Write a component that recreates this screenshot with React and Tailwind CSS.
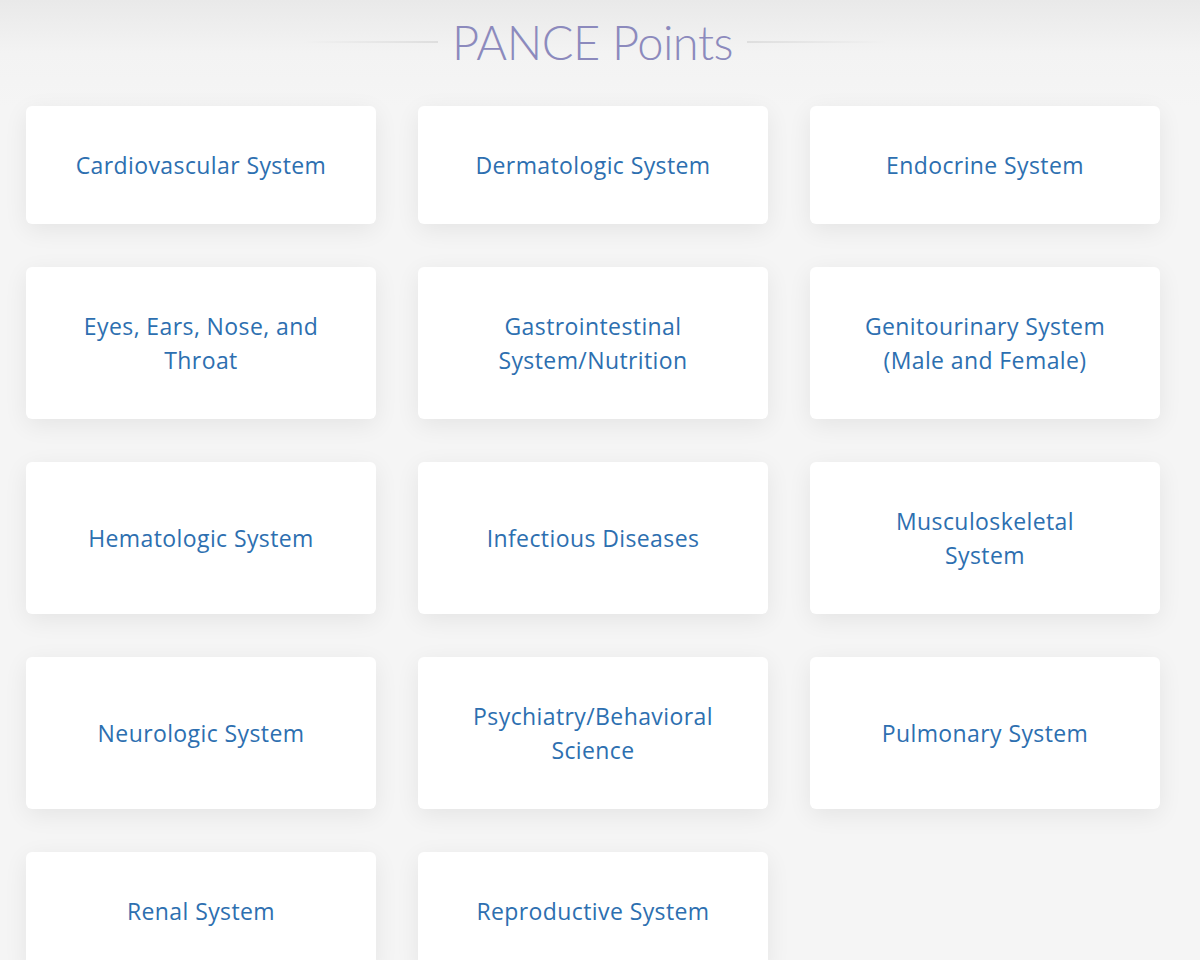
const topics = [
    "Cardiovascular System",
    "Dermatologic System",
    "Endocrine System",
    "Eyes, Ears, Nose, and Throat",
    "Gastrointestinal System/Nutrition",
    "Genitourinary System (Male and Female)",
    "Hematologic System",
    "Infectious Diseases",
    "Musculoskeletal System",
    "Neurologic System",
    "Psychiatry/Behavioral Science",
    "Pulmonary System",
    "Renal System",
    "Reproductive System",
];

export default function App() {
    return (
        <div className="min-h-screen bg-[#f5f5f5] overflow-hidden">
            <div className="bg-gradient-to-b from-[#e9e9e9] via-[#f3f3f3] to-[#f5f5f5] h-[106px] flex items-start justify-center pt-[14px] pr-[10px]">
                <div className="flex items-center gap-[14px] h-[56px]">
                    <div className="w-[135px] h-[2px] bg-gradient-to-r from-transparent to-[#dedede]" />
                    <h1
                        className="text-[47px] leading-[56px] font-light text-[#8c8abd] tracking-[-0.5px]"
                        style={{ fontFamily: "Lato, sans-serif" }}
                    >
                        PANCE Points
                    </h1>
                    <div className="w-[140px] h-[2px] bg-gradient-to-l from-transparent to-[#dedede]" />
                </div>
            </div>
            <div
                className="pl-[26px] grid grid-cols-[350px_350px_350px] gap-x-[42px] gap-y-[43px]"
                style={{ fontFamily: "'Open Sans', sans-serif" }}
            >
                {topics.map((t) => (
                    <a
                        key={t}
                        href="#"
                        className="bg-white rounded-[6px] shadow-[0_6px_24px_rgba(0,0,0,0.07)] flex items-center justify-center text-center px-[44px] py-[42px] text-[23px] tracking-[0.4px] leading-[34px] text-[#2d6fb0]"
                    >
                        {t}
                    </a>
                ))}
            </div>
        </div>
    );
}
